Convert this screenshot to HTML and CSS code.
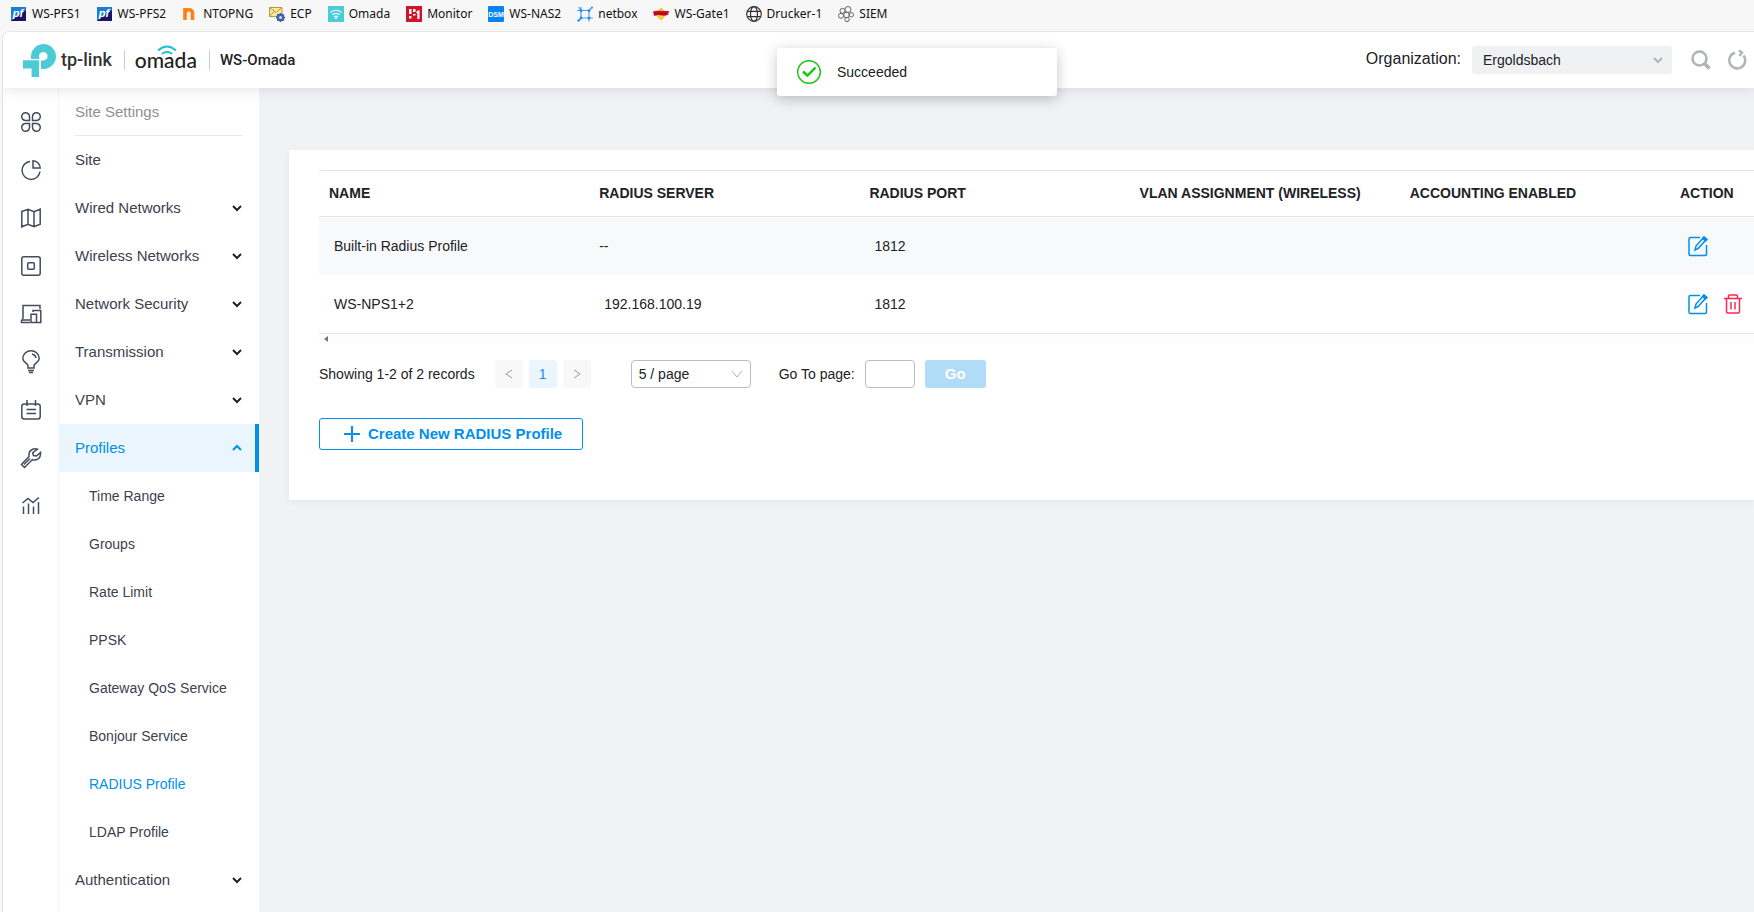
FILE: index.html
```html
<!DOCTYPE html>
<html lang="en">
<head>
<meta charset="utf-8">
<title>WS-Omada - RADIUS Profile</title>
<link rel="stylesheet" href="styles.css">
</head>
<body>
<nav class="bookmarks" aria-label="Bookmarks">
  <a href="#"><svg viewBox="0 0 16 16"><rect y="1" width="15" height="14" fill="#1c7fd6"/><path d="M15 4v11H0l5-4z" fill="#1b1464"/><text x="7" y="11" class="pf">pf</text></svg>WS-PFS1</a>
  <a href="#"><svg viewBox="0 0 16 16"><rect y="1" width="15" height="14" fill="#1c7fd6"/><path d="M15 4v11H0l5-4z" fill="#1b1464"/><text x="7" y="11" class="pf">pf</text></svg>WS-PFS2</a>
  <a href="#"><svg viewBox="0 0 16 16"><path d="M3 14V2M3 6.500C4 3 10.500 2.500 10.500 7V14" fill="none" stroke="#ff7f11" stroke-width="3.600"/></svg>NTOPNG</a>
  <a href="#"><svg viewBox="0 0 16 16"><path d="M.5 1.500h12.500v9H.5z" fill="#fbe7a0" stroke="#b99a3c"/><path d="M.5 1.500l6.500 5 6-5M.5 10.500l4.500-5" fill="none" stroke="#b99a3c"/><circle cx="11.500" cy="11.500" r="3" fill="#cfdcf5" stroke="#3b5ea8" stroke-width="2"/><path d="M11.500 7v9M7 11.500h9M8.300 8.300l6.400 6.400M14.700 8.300l-6.400 6.400" stroke="#3b5ea8"/><circle cx="11.500" cy="11.500" r="1.300" fill="#fff"/></svg>ECP</a>
  <a href="#"><svg viewBox="0 0 16 16"><path d="M0 0h16v16H0z" fill="#4acbd6"/><path d="M2.500 6.500q5.500-4.500 11 0M4.300 8.800q3.700-3 7.400 0M6 11q2-1.600 4 0" fill="none" stroke="#e9fbfc" stroke-width="1.200"/><circle cx="8" cy="12.300" r="1" fill="#fff"/></svg>Omada</a>
  <a href="#"><svg viewBox="0 0 16 16"><path d="M0 0h16v16H0z" fill="#d2142a"/><path d="M3 3h2.500v5H3zM3 10h2.500v2.500H3zM7 3h2.500v3H7zM7 8h2.500v1.500H7zM11 5l2.500-1v9H11.300V7H10z" fill="#fff"/></svg>Monitor</a>
  <a href="#"><svg viewBox="0 0 16 16"><rect width="16" height="16" rx="1" fill="#0a82f0"/><text x="8" y="10.500" class="dsm">DSM</text></svg>WS-NAS2</a>
  <a href="#"><svg viewBox="0 0 16 16"><path d="M4 4.500h8v7.500H4zM4 4.500L1.500 1M12 4.500L15 1.500M4 12l-2.500 3M12 12v3.500M0 4.500h4M4 1v3.500M12 12h4" fill="none" stroke="#4da3f7" stroke-width="1.200"/><g fill="#2f8bf0"><circle cx="4" cy="4.500" r="1.500"/><circle cx="12" cy="4.500" r="1.500"/><circle cx="4" cy="12" r="1.500"/><circle cx="12" cy="12" r="1.500"/><circle cx="15" cy="1.500" r="1"/><circle cx="1.500" cy="14.500" r="1.200"/></g></svg>netbox</a>
  <a href="#"><svg viewBox="0 0 16 16"><path d="M8 2l6 6-6 6-6-6z" fill="#ffd21c" stroke="#d9a800" stroke-width=".5"/><path d="M0 5.500l4-.7 12 .2-1 4-4 .7-6-.7-4 1z" fill="#c8102e"/><path d="M2 7.500h12" stroke="#7c0a1c" stroke-dasharray="2 1"/></svg>WS-Gate1</a>
  <a href="#"><svg viewBox="0 0 16 16" fill="none" stroke="#333" stroke-width="1.200"><circle cx="8" cy="8" r="7.300"/><ellipse cx="8" cy="8" rx="3.500" ry="7.300"/><path d="M1.500 5.300h13M1.500 10.700h13"/></svg>Drucker-1</a>
  <a href="#"><svg viewBox="0 0 16 16" fill="none" stroke="#666"><circle cx="10" cy="3.500" r="3"/><circle cx="4.500" cy="4.800" r="2.500"/><circle cx="3" cy="9.800" r="2.500"/><circle cx="8.500" cy="9" r="2.800"/><circle cx="13.300" cy="8.800" r="2.200"/><circle cx="9" cy="13.500" r="2.200"/></svg>SIEM</a>
</nav>

<div class="app">
  <header class="topbar">
    <a class="brand" href="#" aria-label="Home">
      <svg class="brand-mark" viewBox="0 0 33 33" fill="#4acbd6"><path d="M8 15v-2.500A12.500 12.500 0 1 1 20.500 25H18v-8.500h2.500A4.300 4.300 0 1 0 16 12.500V15z"/><path d="M0 16.200h16V33H8.600v-8.500H0z"/></svg>
      <span class="tplink">tp-link</span>
    </a>
    <span class="rule"></span>
    <span class="omada">omada<svg viewBox="0 0 20 10" fill="none" stroke="#1fbfd0" stroke-width="2"><path d="M1 5.500q9-8 18 0M5 9q5-4.500 10 0"/></svg></span>
    <span class="rule"></span>
    <span class="controller">WS-Omada</span>
    <div class="tools">
      <label for="org">Organization:</label>
      <span class="select org"><select id="org"><option>Ergoldsbach</option></select><svg viewBox="0 0 10 10"><path d="M1 3l4 4 4-4"/></svg></span>
      <button class="tool" aria-label="Search"><svg viewBox="0 0 20 20"><circle cx="8.500" cy="8.500" r="7"/><path d="M13.500 13.500l5 5" stroke-width="3.500"/></svg></button>
      <button class="tool" aria-label="Refresh"><svg viewBox="0 0 20 20" stroke-width="2"><path d="M16.500 5.500A8 8 0 1 1 8 2.700"/><path d="M12 .5l3 2-2.500 3.500"/></svg></button>
    </div>
  </header>

  <nav class="rail" aria-label="Main">
    <a href="#" aria-label="Dashboard"><svg viewBox="0 0 20 20"><path d="M8.500 8.500H4.700A3.900 3.900 0 1 1 8.500 4.700zM11.500 8.500h3.800a3.900 3.900 0 1 0-3.800-3.800zM8.500 11.500H4.700a3.900 3.900 0 1 0 3.800 3.800zM11.500 11.500h3.800a3.900 3.900 0 1 1-3.800 3.800z"/></svg></a>
    <a href="#" aria-label="Statistics"><svg viewBox="0 0 20 20"><path d="M9 1.500a9 9 0 1 0 10 10M12 .8V8h7.200A7.500 7.500 0 0 0 12 .8z"/></svg></a>
    <a href="#" aria-label="Map"><svg viewBox="0 0 20 20"><path d="M.8 3.500L7 1.200l6 2.600 6.200-2.600v15L13 18.800l-6-2.500-6.200 2.500zM7 1.200v15M13 3.800v15"/></svg></a>
    <a href="#" aria-label="Devices"><svg viewBox="0 0 20 20"><rect x=".8" y=".8" width="18.400" height="18.400" rx="2"/><rect x="6.700" y="6.700" width="6.600" height="6.600" rx="1"/></svg></a>
    <a href="#" aria-label="Clients"><svg viewBox="0 0 20 20"><path d="M2 15V1.500h17V5M0 16h9M.5 16v2.500H9M10 18.500V10.300h5.500v8.200zM12 8V6.500h7.800v12H16"/></svg></a>
    <a href="#" aria-label="Insights"><svg class="bulb" viewBox="0 0 20 24"><path d="M7 18v-2.500C6 13 1.800 12 1.800 8.500a8.200 7.700 0 0 1 16.400 0C18.200 12 14 13 13 15.500V18zM7 20.500h6M8 22.500h4M11 4q3.500.8 4 4"/></svg></a>
    <a href="#" aria-label="Logs"><svg viewBox="0 0 20 20"><rect x=".8" y="4" width="18.400" height="15" rx="2.500"/><path d="M6 0v6M14.500 0v6M5.500 9.500h9.500M5.500 13.500h9.500"/></svg></a>
    <a href="#" aria-label="Tools"><svg viewBox="0 0 20 20"><path d="M16.500 1.200c-3.500-1.500-8 .8-8.500 4.500v2.800L.5 16.500l3 3 7.700-7.700c4 1 8-1 8.300-5V4.500l-4 3.500-3-.5-.8-2.800zM3 16.500l6-6"/></svg></a>
    <a href="#" aria-label="Reports"><svg viewBox="0 0 20 20"><path d="M2.500 18v-7.500M7.500 18V7.500M12.500 18v-7.500M17.500 18V6M1.500 7l5.500-4.500 5 4 6-5"/></svg></a>
  </nav>

  <nav class="sidebar" aria-label="Site settings">
    <h2>Site Settings</h2>
    <a href="#">Site</a>
    <a href="#">Wired Networks<svg viewBox="0 0 10 10"><path d="M1 3l4 4 4-4"/></svg></a>
    <a href="#">Wireless Networks<svg viewBox="0 0 10 10"><path d="M1 3l4 4 4-4"/></svg></a>
    <a href="#">Network Security<svg viewBox="0 0 10 10"><path d="M1 3l4 4 4-4"/></svg></a>
    <a href="#">Transmission<svg viewBox="0 0 10 10"><path d="M1 3l4 4 4-4"/></svg></a>
    <a href="#">VPN<svg viewBox="0 0 10 10"><path d="M1 3l4 4 4-4"/></svg></a>
    <a href="#" class="open">Profiles<svg viewBox="0 0 10 10"><path d="M1 7l4-4 4 4"/></svg></a>
    <a href="#" class="sub">Time Range</a>
    <a href="#" class="sub">Groups</a>
    <a href="#" class="sub">Rate Limit</a>
    <a href="#" class="sub">PPSK</a>
    <a href="#" class="sub">Gateway QoS Service</a>
    <a href="#" class="sub">Bonjour Service</a>
    <a href="#" class="sub current">RADIUS Profile</a>
    <a href="#" class="sub">LDAP Profile</a>
    <a href="#">Authentication<svg viewBox="0 0 10 10"><path d="M1 3l4 4 4-4"/></svg></a>
  </nav>

  <main class="content">
    <section class="card">
      <table class="profiles">
        <thead>
          <tr><th>NAME</th><th>RADIUS SERVER</th><th>RADIUS PORT</th><th>VLAN ASSIGNMENT (WIRELESS)</th><th>ACCOUNTING ENABLED</th><th class="action">ACTION</th></tr>
        </thead>
        <tbody>
          <tr><td>Built-in Radius Profile</td><td class="none">--</td><td>1812</td><td></td><td></td>
            <td><div class="actions"><button class="edit" aria-label="Edit"><svg viewBox="0 0 20 20"><path d="M12 1.500H2.500a1.500 1.500 0 0 0-1.500 1.500v15a1.500 1.500 0 0 0 1.500 1.500H17a1.500 1.500 0 0 0 1.500-1.500V9"/><path d="M7 14l1-4 8-9 2.500 2.300-8.200 9zM15 2l2.500 2.300"/><path d="M16 1l3 2.500-1.500 1.500-3-2.500z" fill="currentColor"/></svg></button></div></td></tr>
          <tr><td>WS-NPS1+2</td><td>192.168.100.19</td><td>1812</td><td></td><td></td>
            <td><div class="actions"><button class="edit" aria-label="Edit"><svg viewBox="0 0 20 20"><path d="M12 1.500H2.500a1.500 1.500 0 0 0-1.500 1.500v15a1.500 1.500 0 0 0 1.500 1.500H17a1.500 1.500 0 0 0 1.500-1.500V9"/><path d="M7 14l1-4 8-9 2.500 2.300-8.200 9zM15 2l2.500 2.300"/><path d="M16 1l3 2.500-1.500 1.500-3-2.500z" fill="currentColor"/></svg></button><button class="delete" aria-label="Delete"><svg viewBox="0 0 20 20"><path d="M1 4.500h18M5.500 4.500V2q0-1 1-1h7q1 0 1 1v2.500M3.500 4.500v13q0 1.500 1.500 1.500h10q1.500 0 1.500-1.500v-13M8 8v7.500M12 8v7.500"/></svg></button></div></td></tr>
        </tbody>
      </table>
      <div class="scroll-track"><svg viewBox="0 0 4 6"><path d="M4 0v6L0 3z"/></svg></div>

      <div class="pager">
        <span class="count">Showing 1-2 of 2 records</span>
        <div class="pages">
          <button aria-label="Previous page"><svg viewBox="0 0 10 10"><path d="M8 1L2 5l6 4"/></svg></button>
          <button class="active">1</button>
          <button aria-label="Next page"><svg viewBox="0 0 10 10"><path d="M2 1l6 4-6 4"/></svg></button>
        </div>
        <span class="select size"><select aria-label="Page size"><option>5 / page</option></select><svg viewBox="0 0 10 10"><path d="M0 2l5 6 5-6"/></svg></span>
        <label for="goto">Go To page:</label>
        <input id="goto" type="text">
        <button class="go">Go</button>
      </div>

      <button class="create"><svg viewBox="0 0 16 16"><path d="M8 0v16M0 8h16"/></svg>Create New RADIUS Profile</button>
    </section>
  </main>
</div>

<div class="toast" role="status">
  <svg viewBox="0 0 24 24"><circle cx="12" cy="12" r="11.300" stroke-width="1.400"/><path d="M6 11.500l4.500 4 8-8" stroke-width="2.400"/></svg>
  Succeeded
</div>
</body>
</html>
```

FILE: styles.css
```css
* { box-sizing: border-box; }

body {
  margin: 0;
  height: 100vh;
  display: flex;
  flex-direction: column;
  overflow: hidden;
  position: relative;
  background: #f7f7f7;
  color: #212225;
  font: 14px/20px "Liberation Sans", Arial, sans-serif;
}

a { color: inherit; text-decoration: none; }
svg { display: block; flex: none; overflow: visible; }

button, select, input { font: inherit; color: inherit; margin: 0; }

button {
  padding: 0;
  border: 0;
  background: none;
  display: flex;
  align-items: center;
  justify-content: center;
}

/* Bookmarks */
.bookmarks {
  flex: none;
  display: flex;
  align-items: center;
  gap: 16px;
  height: 31px;
  padding: 0 11px 3px;
  font: 12px/16px "Noto Sans", sans-serif;
  color: #111;
  white-space: nowrap;
}
.bookmarks a { display: flex; align-items: center; gap: 5px; }
.bookmarks svg { width: 16px; height: 16px; }
.pf { font: italic bold 11px "Liberation Sans", sans-serif; fill: #fff; text-anchor: middle; }
.dsm { font: bold 7px "Liberation Sans", sans-serif; fill: #fff; text-anchor: middle; }

/* Shell */
.app {
  flex: 1;
  min-height: 0;
  margin-left: 2px;
  display: grid;
  grid-template: 56px 1fr / 56px 200px 1fr;
  border-top: 1px solid #e6e6e6;
  border-left: 1px solid #e2e2e2;
  border-radius: 8px 0 0 0;
  background: #f1f2f4;
  overflow: hidden;
}

.topbar {
  grid-column: 1 / -1;
  z-index: 1;
  display: flex;
  align-items: center;
  padding: 0 7px 0 20px;
  background: #fff;
  box-shadow: 0 2px 12px rgba(80, 85, 110, .14);
}
.brand { display: flex; align-items: center; gap: 5px; }
.brand-mark { width: 33px; height: 33px; }
.tplink { font: 500 18px/24px Roboto, sans-serif; color: #333; }
.rule { width: 1px; height: 20px; background: #ccc; margin: 0 10px 0 12px; }
.omada { position: relative; font: 500 21px/24px "Lato", sans-serif; color: #222; }
.omada svg { position: absolute; left: 22px; top: -3px; width: 20px; height: 10px; }
.controller { font: 500 15px/20px Roboto, sans-serif; }

.tools { margin-left: auto; display: flex; align-items: center; }
.tools label { font-size: 16px; margin-right: 11px; padding-bottom: 3px; }
.select { position: relative; display: block; }
.select select {
  width: 100%;
  height: 28px;
  border: 0;
  border-radius: 3px;
  appearance: none;
  background: #f0f1f3;
}
.select svg {
  position: absolute;
  right: 9px;
  top: 9px;
  width: 10px;
  height: 10px;
  fill: none;
  stroke: #b0b4b8;
  stroke-width: 2;
  pointer-events: none;
}
.org { width: 200px; margin-right: 19px; }
.org select { padding: 0 11px; }
.tool + .tool { margin-left: 16px; }
.tool svg { width: 20px; height: 20px; fill: none; stroke: #b0b4b8; stroke-width: 2.5; }

.rail { background: #fff; padding-top: 10px; border-right: 1px solid #f5f5f5; }
.rail a { display: flex; align-items: center; justify-content: center; height: 48px; }
.rail svg { width: 20px; height: 20px; fill: none; stroke: #454b5c; stroke-width: 1.5; }
.rail .bulb { height: 24px; }

.sidebar { background: #fff; overflow: hidden; font-size: 15px; color: #3c4150; }
.sidebar h2 {
  margin: 0 16px;
  height: 48px;
  border-bottom: 1px solid #e8e8e8;
  font: 15px/48px "Liberation Sans", Arial, sans-serif;
  color: #909090;
}
.sidebar a {
  display: flex;
  align-items: center;
  justify-content: space-between;
  height: 48px;
  padding: 0 17px 0 16px;
}
.sidebar svg { width: 10px; height: 10px; fill: none; stroke: #222; stroke-width: 2; }
.sidebar .open { padding-right: 13px; border-right: 4px solid #0190ea; background: #ebf5fe; color: #0190ea; }
.sidebar .open svg { stroke: #0190ea; }
.sidebar .sub { padding-left: 30px; font-size: 14px; }
.sidebar .current { color: #0190ea; }

/* Content */
.content { min-width: 0; padding: 62px 0 0 30px; }
.card {
  padding: 20px 0 50px 30px;
  background: #fff;
  box-shadow: 0 2px 6px rgba(0, 0, 0, .06);
}
.profiles {
  width: 100%;
  table-layout: fixed;
  border-collapse: separate;
  border-spacing: 0;
  border-top: 1px solid #e3e4e6;
  border-bottom: 1px solid #e3e4e6;
  border-radius: 4px 0 0 0;
  white-space: nowrap;
}
.profiles th {
  height: 46px;
  padding: 0 10px 2px;
  border-bottom: 1px solid #e3e4e6;
  text-align: left;
}
.profiles .action { width: 84px; }
.profiles td { height: 58px; padding: 0 15px; }
.profiles .none { padding-left: 10px; }
.profiles tbody tr:first-child { background: #f8f9fb; }
.actions { display: flex; gap: 15px; padding-left: 3px; }
.actions svg { width: 20px; height: 20px; fill: none; stroke: currentColor; stroke-width: 1.5; }
.edit { color: #0190ea; }
.delete { color: #fa2850; }

.scroll-track { display: flex; align-items: center; height: 10px; padding-left: 5px; background: #fcfcfc; }
.scroll-track svg { width: 4px; height: 6px; fill: #777; }

.pager { display: flex; align-items: center; height: 28px; margin: 16px 0 30px; }
.pages { display: flex; gap: 6px; margin: 0 40px 0 20px; }
.pages button { width: 28px; height: 28px; border-radius: 3px; background: #f8f8f8; }
.pages svg { width: 10px; height: 10px; fill: none; stroke: #999; }
.pages .active { background: #ebf5fe; color: #2f86f6; }
.size { width: 120px; margin-right: 28px; }
.size select { padding: 0 7px; border: 1px solid #bcbcbc; border-radius: 4px; background: #fff; }
.size svg { stroke-width: 1; }
.pager input { width: 50px; height: 28px; margin: 0 10px; border: 1px solid #bcbcbc; border-radius: 4px; }
.go { width: 61px; height: 28px; border-radius: 3px; background: #b0dcf8; color: #fff; font-weight: bold; font-size: 15px; }

.create {
  height: 32px;
  padding: 0 20px 0 24px;
  gap: 8px;
  border: 1px solid #0190ea;
  border-radius: 3px;
  color: #0190ea;
  font-size: 15px;
  font-weight: bold;
}
.create svg { width: 16px; height: 16px; stroke: currentColor; stroke-width: 2; }

.toast {
  position: absolute;
  z-index: 2;
  top: 48px;
  left: calc(50% - 100px);
  width: 280px;
  height: 48px;
  padding: 0 20px;
  display: flex;
  align-items: center;
  gap: 16px;
  border-radius: 3px;
  background: #fff;
  box-shadow: 0 3px 14px rgba(0, 0, 0, .22);
}
.toast svg { width: 24px; height: 24px; fill: none; stroke: #14c80a; }
```
